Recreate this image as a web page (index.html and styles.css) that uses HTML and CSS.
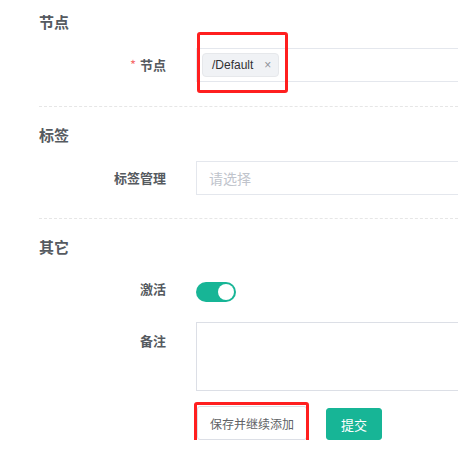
FILE: index.html
```html
<!DOCTYPE html>
<html lang="zh-CN">
<head>
<meta charset="utf-8">
<link rel="stylesheet" href="styles.css">
</head>
<body>
<div class="page">
  <section class="group">
    <h3 class="group-title">节点</h3>
    <div class="row">
      <label class="label"><span class="req">*</span> 节点</label>
      <div class="control">
        <div class="input tags">
          <span class="tag">/Default<span class="tag-close">×</span></span>
        </div>
        <span class="mark mark-node"></span>
      </div>
    </div>
  </section>
  <div class="divider"></div>
  <section class="group">
    <h3 class="group-title">标签</h3>
    <div class="row">
      <label class="label">标签管理</label>
      <div class="control">
        <div class="input"><span class="placeholder">请选择</span></div>
      </div>
    </div>
  </section>
  <div class="divider divider-2"></div>
  <section class="group">
    <h3 class="group-title">其它</h3>
    <div class="row row-switch">
      <label class="label">激活</label>
      <div class="control">
        <span class="switch"><span class="knob"></span></span>
      </div>
    </div>
    <div class="row row-textarea">
      <label class="label label-top">备注</label>
      <div class="control">
        <div class="textarea"></div>
      </div>
    </div>
    <div class="row row-actions">
      <span class="label"></span>
      <div class="actions">
        <div class="btn-wrap">
          <button class="btn btn-default">保存并继续添加</button>
          <span class="mark mark-btn"></span>
        </div>
        <button class="btn btn-primary">提交</button>
      </div>
    </div>
  </section>
</div>
</body>
</html>
```

FILE: styles.css
```css
html, body {
  margin: 0;
  padding: 0;
  background: #ffffff;
  overflow: hidden;
}
body {
  font-family: "Noto Sans CJK SC", "Liberation Sans", sans-serif;
  color: #555a60;
}
.page {
  padding: 12px 0 0 39px;
}
.group-title {
  margin: 0;
  font-size: 15px;
  line-height: 20px;
  font-weight: 700;
  color: #555a60;
}
.row {
  display: flex;
  margin-top: 16px;
}
.label {
  width: 127px;
  margin-right: 30px;
  flex: none;
  text-align: right;
  font-size: 13px;
  font-weight: 700;
  line-height: 34px;
  color: #555a60;
}
.label-top {
  line-height: 38px;
}
.req {
  color: #f56c6c;
  font-weight: 400;
  margin-right: 1px;
}
.control {
  position: relative;
  flex: 1;
  margin-right: -20px;
}
.input {
  box-sizing: border-box;
  height: 34px;
  border: 1px solid #e4e7ed;
  display: flex;
  align-items: center;
  padding: 0 12px;
}
.input.tags {
  padding: 0 5px;
}
.placeholder {
  font-size: 14px;
  color: #c0c4cc;
}
.tag {
  box-sizing: border-box;
  height: 24px;
  display: inline-flex;
  align-items: center;
  padding: 0 7px 0 9px;
  background: #f0f2f5;
  border: 1px solid #e6e8eb;
  border-radius: 4px;
  font-family: "Liberation Sans", sans-serif;
  font-size: 12px;
  color: #303133;
}
.tag-close {
  margin-left: 11px;
  color: #909399;
  font-size: 12px;
}
.divider {
  margin-top: 24px;
  border-top: 1px dashed #e6e6e6;
  margin-bottom: 18px;
}
.divider-2 {
  margin-top: 23px;
}
.row-switch {
  margin-top: 15px;
}
.switch {
  display: block;
  position: relative;
  width: 40px;
  height: 20px;
  margin-top: 10px;
  border-radius: 10px;
  background: #17b596;
}
.knob {
  position: absolute;
  top: 2px;
  right: 2px;
  width: 16px;
  height: 16px;
  border-radius: 50%;
  background: #ffffff;
}
.textarea {
  box-sizing: border-box;
  height: 69px;
  border: 1px solid #dcdfe6;
}
.row-actions {
  margin-top: 15px;
}
.actions {
  display: flex;
  align-items: flex-start;
  gap: 19px;
}
.btn-wrap {
  position: relative;
  margin-left: 1px;
}
.btn {
  box-sizing: border-box;
  font-family: "Noto Sans CJK SC", sans-serif;
  border-radius: 3px;
  cursor: pointer;
  padding: 0;
  margin: 0;
}
.btn-default {
  width: 110px;
  height: 34px;
  background: #ffffff;
  border: 1px solid #dcdfe6;
  color: #606266;
  font-size: 12px;
}
.btn-primary {
  margin-top: 2px;
  width: 56px;
  height: 32px;
  background: #17b596;
  border: 1px solid #17b596;
  color: #ffffff;
  font-size: 13px;
}
.mark {
  position: absolute;
  box-sizing: border-box;
  border: 3px solid #ff1f1f;
  border-radius: 3px;
  pointer-events: none;
}
.mark-node {
  left: 1px;
  top: -16px;
  width: 91px;
  height: 61px;
}
.mark-btn {
  left: -3px;
  top: -4px;
  width: 115px;
  height: 42px;
}
```
